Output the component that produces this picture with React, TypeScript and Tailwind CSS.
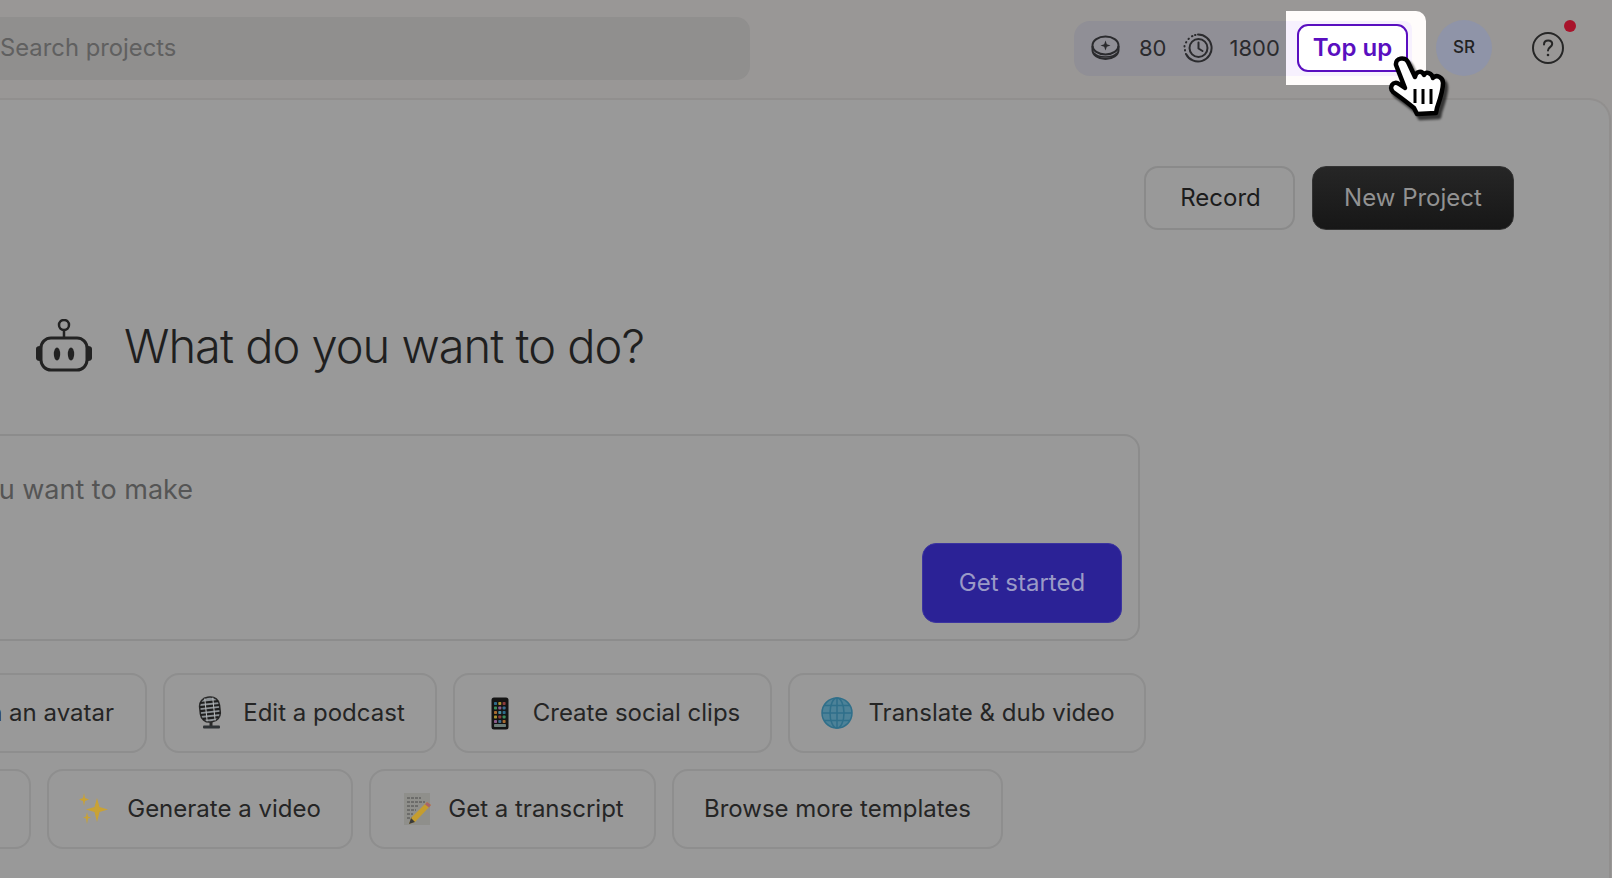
const font = { fontFamily: 'Inter, "Liberation Sans", sans-serif' };

function CoinIcon() {
  return (
    <svg width="29" height="26" viewBox="0 0 29 26" fill="none" stroke="#2b2b2e" strokeWidth="2">
      <ellipse cx="14.5" cy="10.5" rx="13" ry="9" />
      <path d="M1.5 11v4c0 5 6 9 13 9s13-4 13-9v-4" />
      <path d="M3 18c2 3 6 4 11.5 4s9.5-1 11.500-4" strokeWidth="1.4" />
      <path d="M14.500 5.500l1.300 3.700 3.700 1.300-3.700 1.300-1.300 3.700-1.300-3.700-3.700-1.300 3.700-1.300z" fill="#2b2b2e" stroke="none" />
    </svg>
  );
}

function ClockIcon() {
  return (
    <svg width="30" height="30" viewBox="0 0 30 30" fill="none" stroke="#2b2b2e" strokeWidth="2">
      <path d="M15 1.500a13.500 13.500 0 1 1-12 19.500" strokeLinecap="round" />
      <path d="M2 17.500v-.5M1.500 13.500v-.5M3 9.500l.3-.5M5.500 6l.4-.4M9 3.300l.5-.2M12 2l.5-.1" strokeLinecap="round" />
      <circle cx="15.500" cy="15" r="9" />
      <path d="M15.500 9.500V15.500l4 2.500" strokeLinecap="round" strokeLinejoin="round" />
    </svg>
  );
}

function HelpIcon() {
  return (
    <svg width="32" height="32" viewBox="0 0 32 32" fill="none" stroke="#262626" strokeWidth="2">
      <circle cx="16" cy="16" r="15" />
      <path d="M12 12.500c0-2.500 1.800-4 4.200-4 2.300 0 4 1.500 4 3.500 0 3-4.200 3.300-4.200 6.500" strokeLinecap="round" />
      <circle cx="16" cy="23" r="1.300" fill="#262626" stroke="none" />
    </svg>
  );
}

function RobotIcon() {
  return (
    <svg width="56" height="53" viewBox="0 0 56 53" fill="none" stroke="#222" strokeWidth="3" className="-mt-[2px] shrink-0">
      <circle cx="28" cy="6" r="5" strokeWidth="2.500" />
      <path d="M28 11v7" strokeWidth="2.500" />
      <rect x="5" y="19" width="46" height="32" rx="10" />
      <path d="M4 27v15c-5 0-4-3-4-7.500S-1 27 4 27zM52 27v15c5 0 4-3 4-7.500S57 27 52 27z" fill="#222" stroke="none" />
      <ellipse cx="21" cy="35" rx="3.200" ry="6.500" fill="#222" stroke="none" />
      <ellipse cx="35" cy="35" rx="3.200" ry="6.500" fill="#222" stroke="none" />
    </svg>
  );
}

function HandCursor() {
  return (
    <svg
      width="60"
      height="62"
      viewBox="0 0 60 62"
      className="absolute left-[1388px] top-[56px] drop-shadow-[3px_4px_1px_rgba(0,0,0,0.65)]"
    >
      <path
        d="M8 9C7 2 17 0 20 6L27 21C28 15 34 14 36 19C38 15 44 17 45 22C48 18 55 21 55 27C55 35 52 43 49 52L48 57L29 58L26 52C20 47 12 41 5 36C0 31 6 24 11 28L17 32Z"
        fill="#ffffff"
        stroke="#000000"
        strokeWidth="4.500"
        strokeLinejoin="round"
      />
      <path d="M27 33V47M35 33V48M43 33V48" stroke="#000000" strokeWidth="3" />
    </svg>
  );
}

function MicEmoji() {
  return (
    <svg width="26" height="34" viewBox="0 0 26 34" className="shrink-0">
      <g transform="rotate(-6 13 14)">
        <rect x="3" y="1" width="20" height="25" rx="9" fill="#8d9296" stroke="#2a2a2a" strokeWidth="1.500" />
        <path d="M4 6h18M3 10h20M3 14h20M3 18h20M5 22h16" stroke="#1f1f1f" strokeWidth="2.200" />
        <path d="M9 2v23M17 2v23" stroke="#b4b6b8" strokeWidth="1" />
      </g>
      <path d="M14 26v4" stroke="#2a2a2a" strokeWidth="3" />
      <rect x="6" y="29.500" width="17" height="3" rx="1" fill="#2f3336" />
    </svg>
  );
}

const phoneDots = ['#2d6d8c', '#a89030', '#8c3c3c', '#3c8c5c', '#8c5c8c', '#3c6c8c', '#a86c30', '#4c8c9c'];

function PhoneEmoji() {
  return (
    <div className="flex w-[26px] shrink-0 justify-center">
      <svg width="18" height="33" viewBox="0 0 18 33">
        <rect x="0.500" y="0.500" width="17" height="32" rx="2.500" fill="#141414" />
        {[0, 1, 2, 3, 4].map((row) =>
          [0, 1, 2].map((col) => (
            <rect
              key={`${row}-${col}`}
              x={3 + col * 4.3}
              y={5 + row * 4.500}
              width="3"
              height="3"
              rx="0.700"
              fill={phoneDots[(row * 3 + col) % phoneDots.length]}
            />
          )),
        )}
        <rect x="3" y="27" width="12" height="3" rx="0.700" fill="#6d7d78" />
      </svg>
    </div>
  );
}

function GlobeEmoji() {
  return (
    <svg width="32" height="32" viewBox="0 0 32 32" fill="#41788f" stroke="#2f6f8a" strokeWidth="1.500" className="-mr-[5px] shrink-0">
      <circle cx="16" cy="16" r="15" fill="#4d8298" />
      <ellipse cx="16" cy="16" rx="7" ry="15" fill="none" />
      <path d="M16 1v30M1 16h30M3.500 8.500h25M3.500 23.500h25" fill="none" />
    </svg>
  );
}

function SparkleEmoji() {
  return (
    <svg width="30" height="32" viewBox="0 0 30 32" fill="#c9a235" className="-mr-[2px] shrink-0">
      <path d="M18 5l2.500 9L29 16.500 20.500 19 18 29l-2.500-10L7 16.500 15.500 14z" />
      <path d="M5 0l1 5 4 1.500-4 1.500-1 5-1-5-4-1.500 4-1.500z" />
      <path d="M8 19l1 4.500 3 1-3 1L8 31l-1-5.500-3-1 3-1z" />
    </svg>
  );
}

function MemoEmoji() {
  return (
    <svg width="28" height="32" viewBox="0 0 28 32" className="-mr-[4px] shrink-0">
      <rect x="0" y="0" width="26" height="32" fill="#8f8f8b" />
      <path d="M3 5h14M3 9h18M3 13h12M3 17h9M3 21h6M3 25h5" stroke="#4b4b4b" strokeWidth="1" strokeDasharray="3 1" />
      <path d="M23 9l4 3-16 17-6 2 2-6z" fill="#c59d2e" />
      <path d="M23 9l4 3-2 2.500-4-3z" fill="#a8636c" />
      <path d="M5 31l2-6 4 4z" fill="#3a3a3a" />
    </svg>
  );
}

function Chip({ icon, label, width }: { icon?: React.ReactNode; label: string; width: string }) {
  return (
    <div
      className={`flex h-[80px] shrink-0 items-center justify-center gap-[20px] rounded-[16px] border-2 border-[#8e8e8e] text-[24px] text-[#252525] whitespace-nowrap ${width}`}
    >
      {icon}
      <span>{label}</span>
    </div>
  );
}

export default function App() {
  return (
    <div className="relative h-[878px] w-[1612px] overflow-hidden bg-[#999796]" style={font}>
      <header className="flex h-[98px] items-center">
        <div className="-ml-[200px] -mt-[2px] flex h-[63px] w-[950px] items-center rounded-[14px] bg-[#908f8e] pl-[200px] text-[23.800px] text-[#606060]">
          Search projects
        </div>

        <div className="-mt-[2px] ml-auto flex h-[74px] items-center">
          <div className="flex h-[55px] w-[212px] items-center rounded-l-[16px] bg-[#908f96] pl-[17px] text-[22px] text-[#2b2b2e]">
            <CoinIcon />
            <span className="ml-[19px]">80</span>
            <span className="ml-[16px]">
              <ClockIcon />
            </span>
            <span className="ml-[17px]">1800</span>
          </div>
          <div className="flex h-[74px] w-[140px] items-center rounded-r-[10px] bg-[#fffcfb]">
            <div className="flex h-[55px] w-[126px] items-center rounded-r-[8px] bg-[#f7f1fe] pl-[11px]">
              <div className="flex h-[48px] w-[111px] items-center justify-center rounded-[11px] border-2 border-[#5a0fc0] bg-white text-[24px] font-semibold text-[#5a0fc0]">
                Top up
              </div>
            </div>
          </div>
          <div className="ml-[10px] flex h-[56px] w-[56px] items-center justify-center rounded-full bg-[#8f94a8] text-[17px] font-medium text-[#222]">
            SR
          </div>
          <div className="relative ml-[40px] mr-[48px]">
            <HelpIcon />
            <span className="absolute -right-[12px] -top-[12px] h-[12px] w-[12px] rounded-full bg-[#a8132b]" />
          </div>
        </div>
      </header>

      <main className="ml-[-40px] h-[780px] w-[1651px] rounded-tr-[22px] border-r-2 border-t-2 border-[#918f8e] bg-[#999999] pl-[76px]">
        <div className="flex justify-end gap-[17px] pr-[95px] pt-[66px]">
          <div className="flex h-[64px] w-[151px] items-center justify-center rounded-[14px] border-2 border-[#8a8a8a] pl-[2px] text-[24px] text-[#1c1c1c]">
            Record
          </div>
          <div className="flex h-[64px] w-[202px] items-center justify-center rounded-[14px] border border-[#333] bg-gradient-to-b from-[#262626] to-[#171717] text-[24px] text-[#929292]">
            New Project
          </div>
        </div>

        <div className="mt-[86px] flex h-[60px] items-center gap-[32px]">
          <RobotIcon />
          <h1 className="text-[47px] font-[350] tracking-[-1px] text-[#1f1f1f]">What do you want to do?</h1>
        </div>

        <div className="-ml-[336px] mt-[58px] h-[207px] w-[1440px] rounded-[16px] border-2 border-[#8c8c8c] pr-[16px]">
          <div className="w-[491px] whitespace-nowrap pt-[39px] text-right text-[27px] leading-[30px] text-[#555]">
            Describe what you want to make
          </div>
          <div className="ml-auto mt-[38px] flex h-[80px] w-[200px] items-center justify-center rounded-[14px] border border-[#3b34a0] bg-[#2b2296] text-[24px] text-[#9a9ac6]">
            Get started
          </div>
        </div>

        <div className="-ml-[336px] mt-[32px] flex w-[1446px] justify-end gap-[16px]">
          <Chip label="Chat with an avatar" width="w-[285px]" />
          <Chip icon={<MicEmoji />} label="Edit a podcast" width="w-[274px] pl-[2px]" />
          <Chip icon={<PhoneEmoji />} label="Create social clips" width="w-[319px] pl-[2px]" />
          <Chip icon={<GlobeEmoji />} label="Translate & dub video" width="w-[358px] pl-[2px]" />
        </div>

        <div className="-ml-[336px] mt-[16px] flex w-[1303px] justify-end gap-[16px]">
          <Chip label="Edit a video" width="w-[200px]" />
          <Chip icon={<SparkleEmoji />} label="Generate a video" width="w-[306px]" />
          <Chip icon={<MemoEmoji />} label="Get a transcript" width="w-[287px] pl-[3px]" />
          <Chip label="Browse more templates" width="w-[331px]" />
        </div>
      </main>

      <HandCursor />
    </div>
  );
}
